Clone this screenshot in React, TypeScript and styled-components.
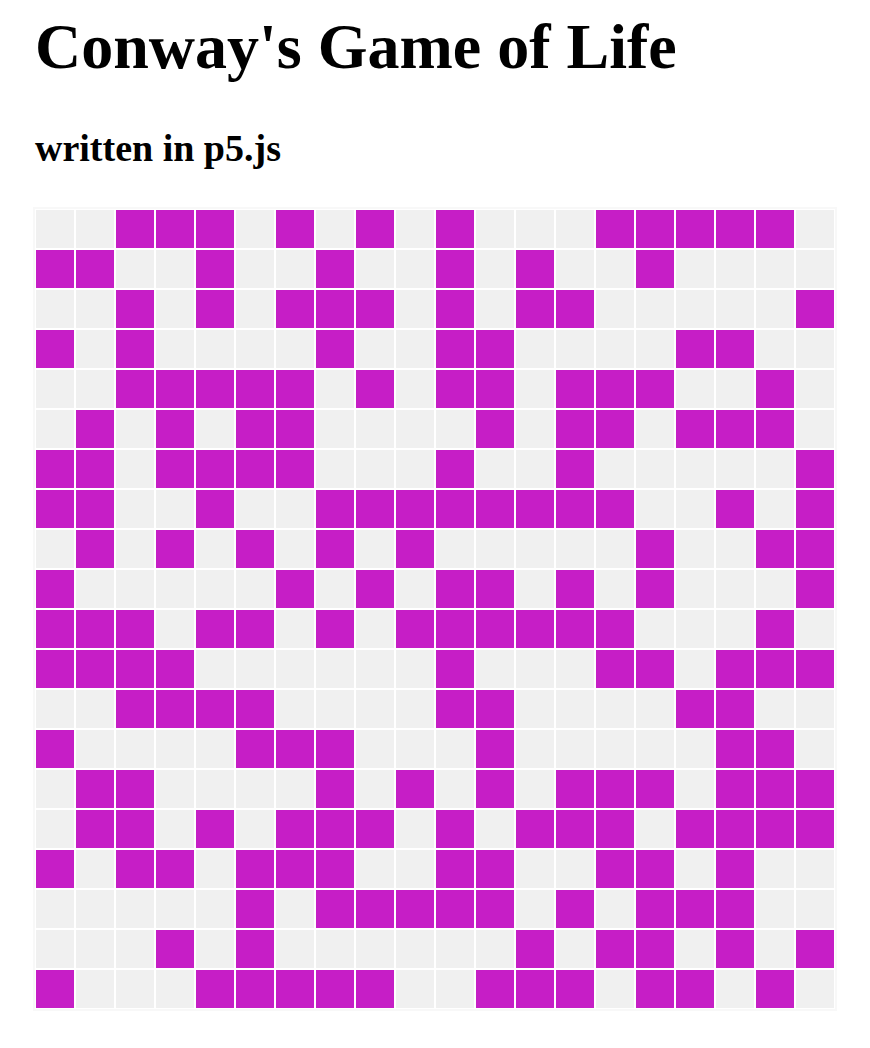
import React from "react";
import styled, { createGlobalStyle } from "styled-components";

const GlobalStyle = createGlobalStyle`
  html, body {
    margin: 0;
    padding: 0;
    background: #ffffff;
  }
  body {
    font-family: "Liberation Serif", "Times New Roman", serif;
    color: #000000;
  }
`;

const Page = styled.main`
  display: flex;
  flex-direction: column;
  align-items: flex-start;
  padding: 11px 0 40px 35px;
`;

const Title = styled.h1`
  margin: 0;
  font-size: 64px;
  line-height: 71px;
  font-weight: 700;
  letter-spacing: 0;
`;

const Subtitle = styled.h2`
  margin: 45px 0 0 0;
  font-size: 38px;
  line-height: 42px;
  font-weight: 700;
`;

const Board = styled.div`
  margin-top: 40px;
  display: grid;
  grid-template-columns: repeat(20, 38px);
  grid-auto-rows: 38px;
  gap: 2px;
  padding: 1px;
  background: #ffffff;
  box-shadow: 0 0 0 2px #f8f8f8;
`;

const Cell = styled.div<{ $alive: boolean }>`
  background: ${(p) => (p.$alive ? "#c61ec6" : "#f0f0f0")};
`;

const rows = [
  "..###.#.#.#...#####.",
  "##..#..#..#.#..#....",
  "..#.#.###.#.##.....#",
  "#.#....#..##....##..",
  "..#####.#.##.###..#.",
  ".#.#.##....#.##.###.",
  "##.####...#..#.....#",
  "##..#..########..#.#",
  ".#.#.#.#.#.....#..##",
  "#.....#.#.##.#.#...#",
  "###.##.#.######...#.",
  "####......#...##.###",
  "..####....##....##..",
  "#....###...#.....##.",
  ".##....#.#.#.###.###",
  ".##.#.###.#.###.####",
  "#.##.###..##..##.#..",
  ".....#.#####.#.###..",
  "...#.#......#.##.#.#",
  "#...#####..###.##.#.",
];

export default function App() {
  return (
    <>
      <GlobalStyle />
      <Page>
        <Title>Conway's Game of Life</Title>
        <Subtitle>written in p5.js</Subtitle>
        <Board>
          {rows.map((row, r) =>
            row.split("").map((c, i) => <Cell key={`${r}-${i}`} $alive={c === "#"} />)
          )}
        </Board>
      </Page>
    </>
  );
}
